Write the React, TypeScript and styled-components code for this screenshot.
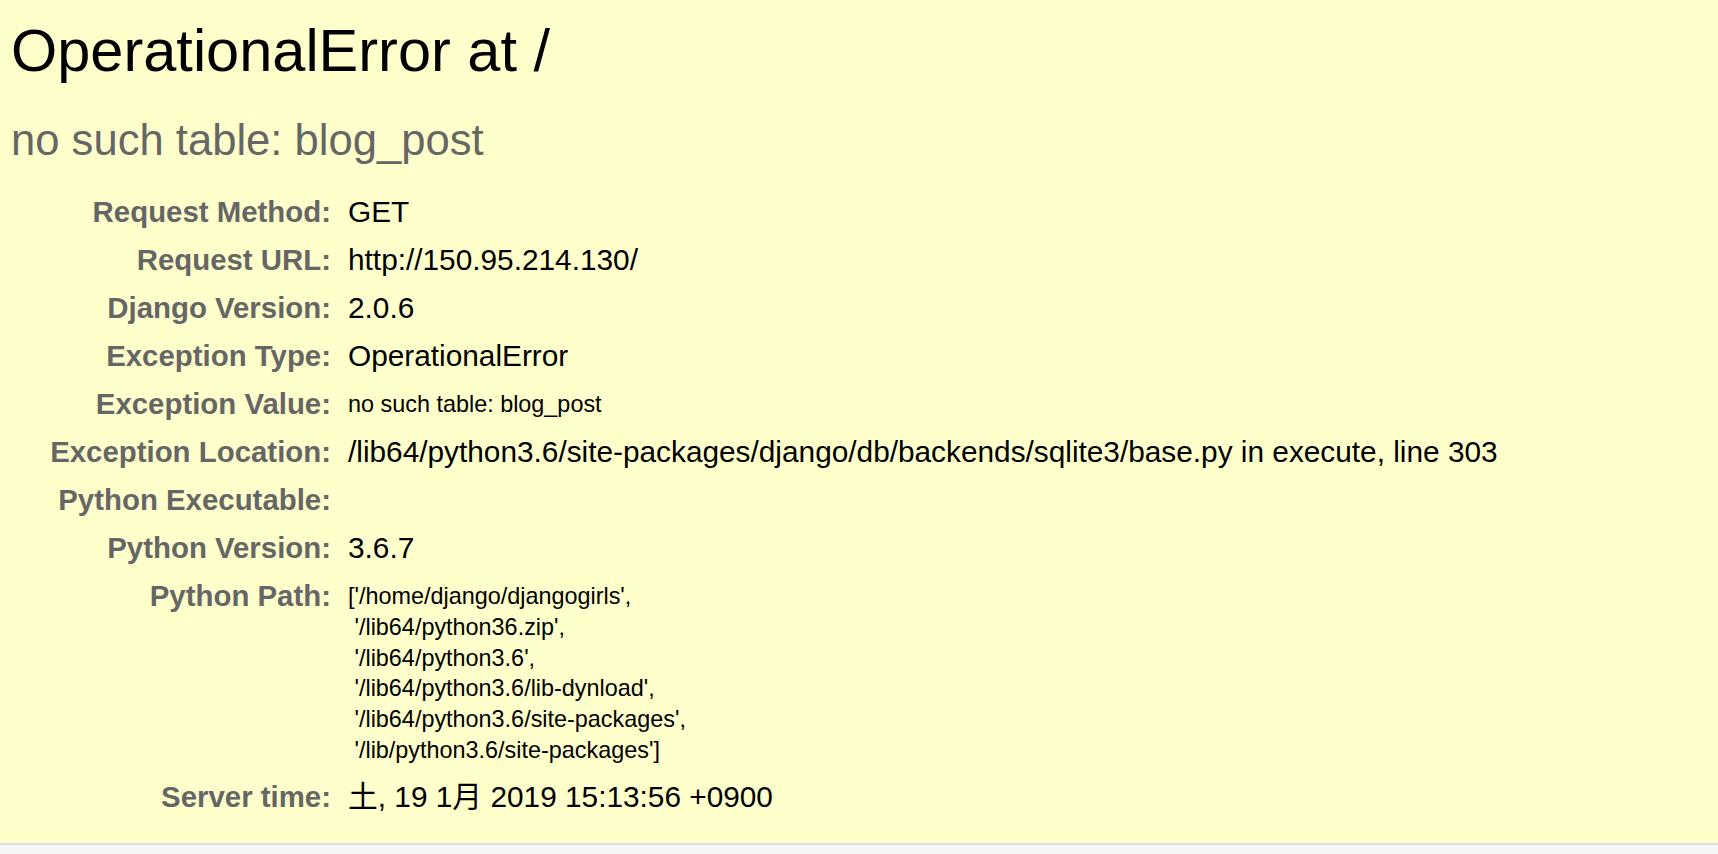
import React from "react";
import styled, { createGlobalStyle } from "styled-components";

const GlobalStyle = createGlobalStyle`
  html, body {
    margin: 0;
    padding: 0;
    background: #f6f6f6;
  }
  body {
    font-family: "Liberation Sans", "Noto Sans CJK JP", sans-serif;
    color: #000;
  }
`;

const Summary = styled.div`
  background: #ffffcc;
  border-bottom: 2px solid #dddddd;
  padding: 18px 20px 22px 11px;
`;

const Title = styled.h1`
  margin: 0;
  font-size: 59.5px;
  line-height: 66px;
  font-weight: normal;
  color: #000;
`;

const ExceptionValue = styled.pre`
  margin: 31px 0 0 0;
  font-family: "Liberation Sans", "Noto Sans CJK JP", sans-serif;
  font-size: 43.6px;
  line-height: 50px;
  color: #666;
  white-space: pre-wrap;
`;

const Meta = styled.dl`
  display: grid;
  grid-template-columns: 320px 1fr;
  column-gap: 17px;
  margin: 23px 0 0 0;
`;

const Label = styled.dt`
  text-align: right;
  font-size: 29.4px;
  line-height: 34px;
  font-weight: bold;
  color: #666;
  padding: 7px 0;
  white-space: nowrap;
`;

const Value = styled.dd`
  margin: 0;
  font-size: 29.8px;
  line-height: 34px;
  color: #000;
  padding: 7px 0;
  min-height: 34px;
  white-space: nowrap;
`;

const Pre = styled.pre`
  margin: 0;
  padding-top: 2px;
  font-family: "Liberation Sans", "Noto Sans CJK JP", sans-serif;
  font-size: 23.4px;
  line-height: 30.8px;
  color: #000;
  white-space: pre;
`;

type Row = { label: string; value?: string; pre?: boolean };

const rows: Row[] = [
  { label: "Request Method:", value: "GET" },
  { label: "Request URL:", value: "http://150.95.214.130/" },
  { label: "Django Version:", value: "2.0.6" },
  { label: "Exception Type:", value: "OperationalError" },
  { label: "Exception Value:", value: "no such table: blog_post", pre: true },
  {
    label: "Exception Location:",
    value:
      "/lib64/python3.6/site-packages/django/db/backends/sqlite3/base.py in execute, line 303",
  },
  { label: "Python Executable:", value: "" },
  { label: "Python Version:", value: "3.6.7" },
  {
    label: "Python Path:",
    pre: true,
    value: [
      "['/home/django/djangogirls',",
      " '/lib64/python36.zip',",
      " '/lib64/python3.6',",
      " '/lib64/python3.6/lib-dynload',",
      " '/lib64/python3.6/site-packages',",
      " '/lib/python3.6/site-packages']",
    ].join("\n"),
  },
  { label: "Server time:", value: "土, 19 1月 2019 15:13:56 +0900" },
];

export default function App() {
  return (
    <>
      <GlobalStyle />
      <Summary>
        <Title>OperationalError at /</Title>
        <ExceptionValue>no such table: blog_post</ExceptionValue>
        <Meta>
          {rows.map((r) => (
            <React.Fragment key={r.label}>
              <Label>{r.label}</Label>
              <Value>{r.pre ? <Pre>{r.value}</Pre> : r.value}</Value>
            </React.Fragment>
          ))}
        </Meta>
      </Summary>
    </>
  );
}
